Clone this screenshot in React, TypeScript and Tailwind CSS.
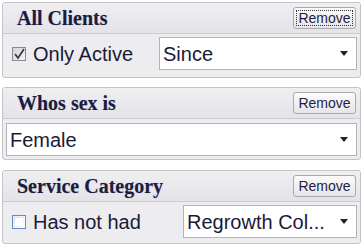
import React from "react";

const Arrow = () => (
  <svg width="8" height="5" viewBox="0 0 8 5" className="shrink-0">
    <polygon points="0,0 8,0 4,5" fill="#222" />
  </svg>
);

const RemoveBtn = ({ focused = false }: { focused?: boolean }) => (
  <button
    className="h-[22px] w-[63px] rounded-[3px] border border-[#a9a9ae] bg-gradient-to-b from-[#fbfbfb] to-[#e6e6e8] text-[14px] leading-none text-[#1e1e46] flex items-center justify-center"
    style={{ fontFamily: '"Liberation Sans", Arial, sans-serif' }}
  >
    <span className={focused ? "outline outline-1 outline-dotted outline-[#333] px-[1px]" : ""}>Remove</span>
  </button>
);

const Header = ({ title, focused }: { title: string; focused?: boolean }) => (
  <div className="h-[31px] flex items-center justify-between pl-[14px] pr-[4px] border-b border-[#cdcdd1] bg-gradient-to-b from-[#efeff2] to-[#e4e4e8]">
    <span
      className="text-[20px] font-bold text-[#1c1c40]"
      style={{ fontFamily: '"Liberation Serif", "Times New Roman", serif', textShadow: "0 0 1px rgba(60,60,110,0.35)" }}
    >
      {title}
    </span>
    <RemoveBtn focused={focused} />
  </div>
);

const Select = ({ text, className }: { text: string; className: string }) => (
  <div className={`h-[33px] bg-white border border-[#b4b4b8] flex items-center justify-between pl-[3px] pr-[8px] ${className}`}>
    <span className="text-[20px] text-[#1a1a38] whitespace-nowrap">{text}</span>
    <Arrow />
  </div>
);

const CheckBox = ({ checked }: { checked: boolean }) =>
  checked ? (
    <svg width="14" height="14" viewBox="0 0 14 14" className="shrink-0">
      <defs>
        <linearGradient id="cg" x1="0" y1="0" x2="1" y2="1">
          <stop offset="0" stopColor="#d4d4d8" />
          <stop offset="1" stopColor="#f4f4f6" />
        </linearGradient>
      </defs>
      <rect x="0.5" y="0.5" width="13" height="13" fill="url(#cg)" stroke="#8a8a8e" />
      <path d="M3 7 L6 11 L12 2" fill="none" stroke="#3c3c46" strokeWidth="1.8" />
    </svg>
  ) : (
    <svg width="14" height="14" viewBox="0 0 14 14" className="shrink-0">
      <defs>
        <linearGradient id="ug" x1="0" y1="0" x2="1" y2="1">
          <stop offset="0" stopColor="#cfd9f2" />
          <stop offset="1" stopColor="#ffffff" />
        </linearGradient>
      </defs>
      <rect x="0.5" y="0.5" width="13" height="13" fill="#fff" stroke="#6f86c4" />
      <rect x="1.5" y="1.5" width="11" height="11" fill="url(#ug)" />
      <rect x="3" y="3" width="8" height="8" fill="#fff" />
    </svg>
  );

export default function App() {
  return (
    <div
      className="w-[363px] h-[246px] bg-white overflow-hidden pt-[2px] px-[2px]"
      style={{ fontFamily: '"Liberation Sans", Arial, sans-serif' }}
    >
      <div className="h-[76px] rounded-[3px] border border-[#c4c4c8] bg-[#ededef] overflow-hidden">
        <Header title="All Clients" focused />
        <div className="flex items-center pl-[9px] pr-[3px] pt-[3px]">
          <CheckBox checked />
          <span className="ml-[7px] text-[20px] text-[#1a1a38]">Only Active</span>
          <Select text="Since" className="ml-auto w-[198px]" />
        </div>
      </div>

      <div className="mt-[9px] h-[73px] rounded-[3px] border border-[#c4c4c8] bg-[#ededef] overflow-hidden">
        <Header title="Whos sex is" />
        <div className="pl-[3px] pr-[3px] pt-[4px]">
          <Select text="Female" className="w-full" />
        </div>
      </div>

      <div className="mt-[10px] h-[74px] rounded-[3px] border border-[#c4c4c8] bg-[#ededef] overflow-hidden">
        <Header title="Service Category" />
        <div className="flex items-center pl-[9px] pr-[3px] pt-[3px]">
          <CheckBox checked={false} />
          <span className="ml-[7px] text-[20px] text-[#1a1a38]">Has not had</span>
          <Select text="Regrowth Col..." className="ml-auto w-[174px]" />
        </div>
      </div>
    </div>
  );
}
